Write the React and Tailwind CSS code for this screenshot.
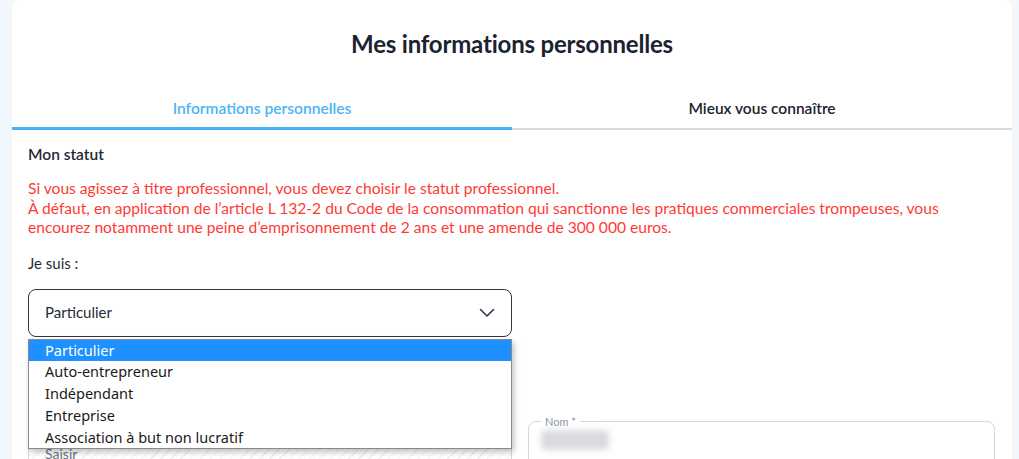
import React from "react";

export default function App() {
  return (
    <div className="w-[1019px] h-[459px] overflow-hidden bg-[#f0f7fd] pl-3 pr-[7px] font-['Lato','Noto_Sans',sans-serif] text-[#1f2937]">
      <div className="bg-white rounded-t-md h-full">
        <h1 className="pt-[30px] text-center text-[24px] font-bold text-[#1b2230] leading-7 tracking-[-0.2px]">
          Mes informations personnelles
        </h1>
        <div className="mt-[39px] flex">
          <div className="flex-1 flex flex-col items-center">
            <span className="text-[15.6px] font-semibold text-[#4db4f5] leading-5 pt-px">Informations personnelles</span>
            <div className="mt-[9px] h-[3px] w-full bg-[#47b3f3]" />
          </div>
          <div className="flex-1 flex flex-col items-center">
            <span className="text-[15.5px] font-semibold text-[#1b2230] leading-5 pt-px">Mieux vous connaître</span>
            <div className="mt-[10px] h-[2px] w-full bg-[#d3dbe3]" />
          </div>
        </div>
        <div className="px-4 pt-[14px]">
          <div className="text-[15.5px] font-semibold text-[#1f2a37] leading-5">Mon statut</div>
          <div className="mt-[15px] text-[15.6px] leading-[19.5px] text-[#ff3a35]">
            Si vous agissez à titre professionnel, vous devez choisir le statut professionnel.
            <br />
            À défaut, en application de l’article L 132-2 du Code de la consommation qui sanctionne les pratiques commerciales trompeuses, vous encourez notamment une peine d’emprisonnement de 2 ans et une amende de 300 000 euros.
          </div>
          <div className="mt-[15px] text-[15px] text-[#1f2a37] leading-5">Je suis :</div>
          <div className="relative mt-[16px] w-[484px]">
            <div className="h-[48px] rounded-lg border border-[#2c3846] flex items-center justify-between pl-4 pr-4">
              <span className="text-[15px] text-[#1f2a37]">Particulier</span>
              <svg width="16" height="10" viewBox="0 0 16 10" fill="none">
                <path d="M1.5 1.5 L8 8 L14.5 1.5" stroke="#2c3846" strokeWidth="1.6" strokeLinecap="round" strokeLinejoin="round" />
              </svg>
            </div>
            <div className="absolute z-10 left-0 top-[50px] w-[484px] bg-white border border-[#8a8a8a] shadow-[2px_3px_6px_rgba(0,0,0,0.25)] font-['Noto_Sans',sans-serif] text-[14.5px] leading-[21.8px] text-[#1a1a1a]">
              <div className="bg-[#1e90ff] text-white pl-4">Particulier</div>
              <div className="pl-4">Auto-entrepreneur</div>
              <div className="pl-4">Indépendant</div>
              <div className="pl-4">Entreprise</div>
              <div className="pl-4">Association à but non lucratif</div>
            </div>
          </div>
          <div className="mt-[85px] grid grid-cols-[484px_467px] gap-4">
            <div className="h-[60px] rounded-lg border border-[#cfd8e2] bg-[repeating-linear-gradient(135deg,#ffffff_0px,#ffffff_6px,#eef1f4_6px,#eef1f4_7px)] px-4 pt-[20px] text-[14px] text-[#6b7280]">
              Saisir
            </div>
            <fieldset className="h-[60px] rounded-lg border border-[#cfd8e2] px-3 -mt-[6px]">
              <legend className="px-1 text-[11px] text-[#8a94a3] leading-3">Nom *</legend>
              <div className="mt-[2px] h-[20px] w-[68px] rounded bg-[#d9dbde] blur-[3px]" />
            </fieldset>
          </div>
        </div>
      </div>
    </div>
  );
}
